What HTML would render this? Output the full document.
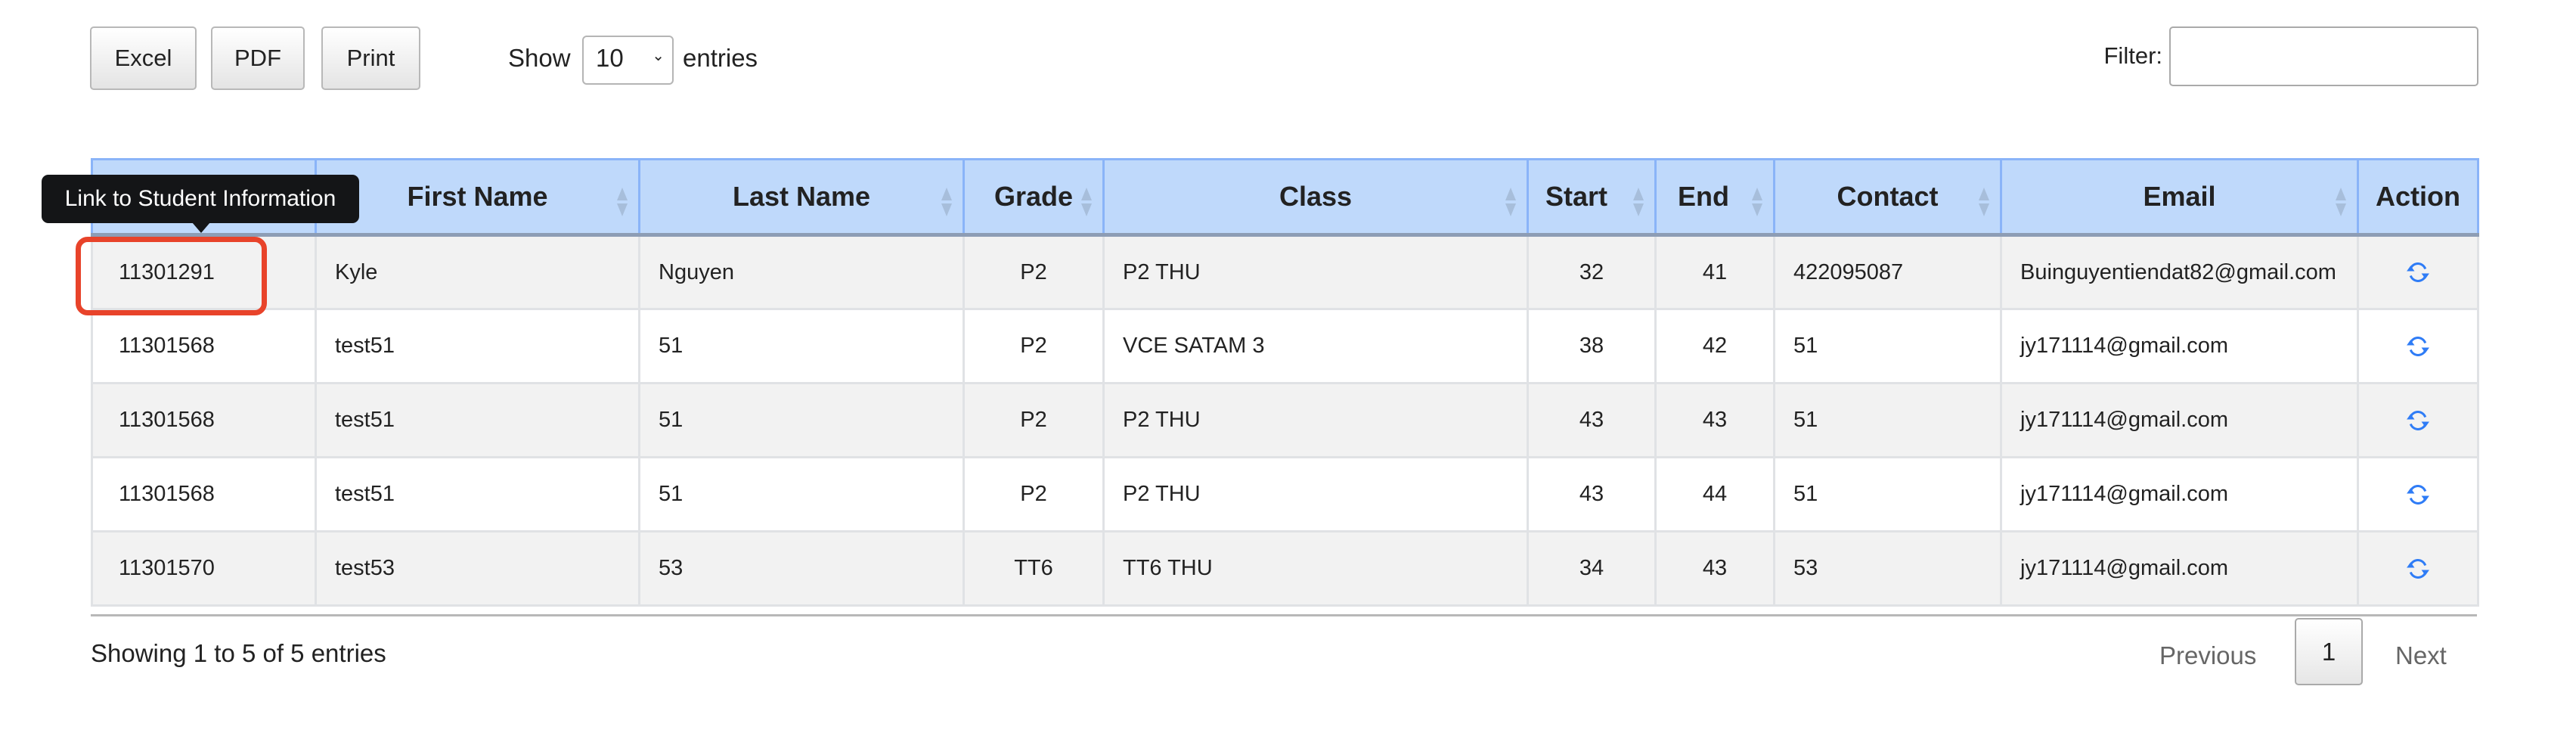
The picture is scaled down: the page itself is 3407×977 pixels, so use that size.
<!DOCTYPE html>
<html><head><meta charset="utf-8"><style>
body{margin:0;width:3407px;height:977px;background:#fff;font-family:"Liberation Sans",Arial,sans-serif;color:#222;position:relative;overflow:hidden}
.btn{position:absolute;top:35px;height:84px;border:2px solid #b8b8b8;border-radius:5px;background:linear-gradient(#fff,#e4e4e4);font-size:31px;display:flex;align-items:center;justify-content:center;box-sizing:border-box}
.abs{position:absolute}
table{position:absolute;left:120px;top:209px;border-collapse:collapse;table-layout:fixed;width:3156px}
th{background:#bfd9fb;height:96px;border:3px solid #8ab4f8;border-bottom:5px solid #8d9db5;font-size:36px;font-weight:bold;position:relative;text-align:center;padding:0}
td{height:98px;border:3px solid #e0e2e5;font-size:29px;padding:0 0 0 24px;box-sizing:border-box}
tr.o td{background:#f2f2f2}
tr.e td{background:#fff}
td.c{text-align:center;padding:0}
.s{position:absolute;right:14px;top:36px;width:14px;height:38px}
.s:before{content:"";position:absolute;left:0;top:0;border-left:7px solid transparent;border-right:7px solid transparent;border-bottom:17px solid #a7bedb}
.s:after{content:"";position:absolute;left:0;bottom:0;border-left:7px solid transparent;border-right:7px solid transparent;border-top:17px solid #a7bedb}
</style></head><body>
<div class="btn" style="left:119px;width:141px">Excel</div>
<div class="btn" style="left:279px;width:124px">PDF</div>
<div class="btn" style="left:425px;width:131px">Print</div>
<div class="abs" style="left:672px;top:58px;font-size:33px">Show</div>
<div class="abs" style="left:770px;top:47px;width:121px;height:65px;border:2px solid #b5b5b5;border-radius:6px;box-sizing:border-box;font-size:33px;padding:9px 0 0 16px">10<span style="position:absolute;right:10px;top:12px;font-size:20px">&#8964;</span></div>
<div class="abs" style="left:903px;top:58px;font-size:33px">entries</div>
<div class="abs" style="right:547px;top:56px;font-size:31px">Filter:</div>
<div class="abs" style="left:2869px;top:35px;width:409px;height:79px;border:2px solid #aaa;border-radius:5px;box-sizing:border-box"></div>
<table>
<colgroup><col style="width:296px"><col style="width:428px"><col style="width:429px"><col style="width:185px"><col style="width:561px"><col style="width:169px"><col style="width:157px"><col style="width:300px"><col style="width:472px"><col style="width:159px"></colgroup>
<tr><th>ID<span class="s"></span></th><th>First Name<span class="s"></span></th><th>Last Name<span class="s"></span></th><th>Grade<span class="s"></span></th><th>Class<span class="s"></span></th><th style="text-align:left;padding-left:22px">Start<span class="s"></span></th><th style="text-align:left;padding-left:28px">End<span class="s"></span></th><th>Contact<span class="s"></span></th><th>Email<span class="s"></span></th><th>Action</th></tr>
<tr class="o"><td style="padding-left:34px">11301291</td><td>Kyle</td><td>Nguyen</td><td class="c">P2</td><td>P2 THU</td><td class="c">32</td><td class="c">41</td><td>422095087</td><td>Buinguyentiendat82@gmail.com</td><td class="c">R</td></tr>
<tr class="e"><td style="padding-left:34px">11301568</td><td>test51</td><td>51</td><td class="c">P2</td><td>VCE SATAM 3</td><td class="c">38</td><td class="c">42</td><td>51</td><td>jy171114@gmail.com</td><td class="c">R</td></tr>
<tr class="o"><td style="padding-left:34px">11301568</td><td>test51</td><td>51</td><td class="c">P2</td><td>P2 THU</td><td class="c">43</td><td class="c">43</td><td>51</td><td>jy171114@gmail.com</td><td class="c">R</td></tr>
<tr class="e"><td style="padding-left:34px">11301568</td><td>test51</td><td>51</td><td class="c">P2</td><td>P2 THU</td><td class="c">43</td><td class="c">44</td><td>51</td><td>jy171114@gmail.com</td><td class="c">R</td></tr>
<tr class="o"><td style="padding-left:34px">11301570</td><td>test53</td><td>53</td><td class="c">TT6</td><td>TT6 THU</td><td class="c">34</td><td class="c">43</td><td>53</td><td>jy171114@gmail.com</td><td class="c">R</td></tr>
</table>
<div class="abs" style="left:120px;top:812px;width:3156px;height:3px;background:#b8b8b8"></div>
<div class="abs" style="left:120px;top:845px;font-size:33px">Showing 1 to 5 of 5 entries</div>
<div class="abs" style="left:2856px;top:848px;font-size:33px;color:#666">Previous</div>
<div class="abs" style="left:3035px;top:817px;width:90px;height:89px;border:2px solid #aaa;border-radius:5px;box-sizing:border-box;background:linear-gradient(#fff,#e6e6e6);font-size:33px;text-align:center;line-height:85px">1</div>
<div class="abs" style="left:3168px;top:848px;font-size:33px;color:#666">Next</div>
<div class="abs" style="left:55px;top:231px;width:420px;height:64px;background:#141517;border-radius:9px;color:#fff;font-size:30px;line-height:64px;text-align:center">Link to Student Information</div>
<div class="abs" style="left:254px;top:294px;border-left:12px solid transparent;border-right:12px solid transparent;border-top:14px solid #141517;width:0;height:0"></div>
<div class="abs" style="left:100px;top:313px;width:253px;height:104px;border:7px solid #e8432a;border-radius:16px;box-sizing:border-box"></div>
<script>
document.querySelectorAll('td.c').forEach(function(t){if(t.textContent==='R'){t.innerHTML='<svg width="36" height="36" viewBox="0 0 24 24" fill="none" stroke="#2f7cf6" stroke-width="2" style="vertical-align:middle"><path d="M18.5 9A7 7 0 0 0 5.5 8.5"/><path d="M5.5 15A7 7 0 0 0 18.5 15.5"/><path d="M3 10.5l2.5-3.5 2.5 3.5z" fill="#2f7cf6" stroke-width="1"/><path d="M16 13.5l2.5 3.5 2.5-3.5z" fill="#2f7cf6" stroke-width="1"/></svg>';}});
</script>
</body></html>
